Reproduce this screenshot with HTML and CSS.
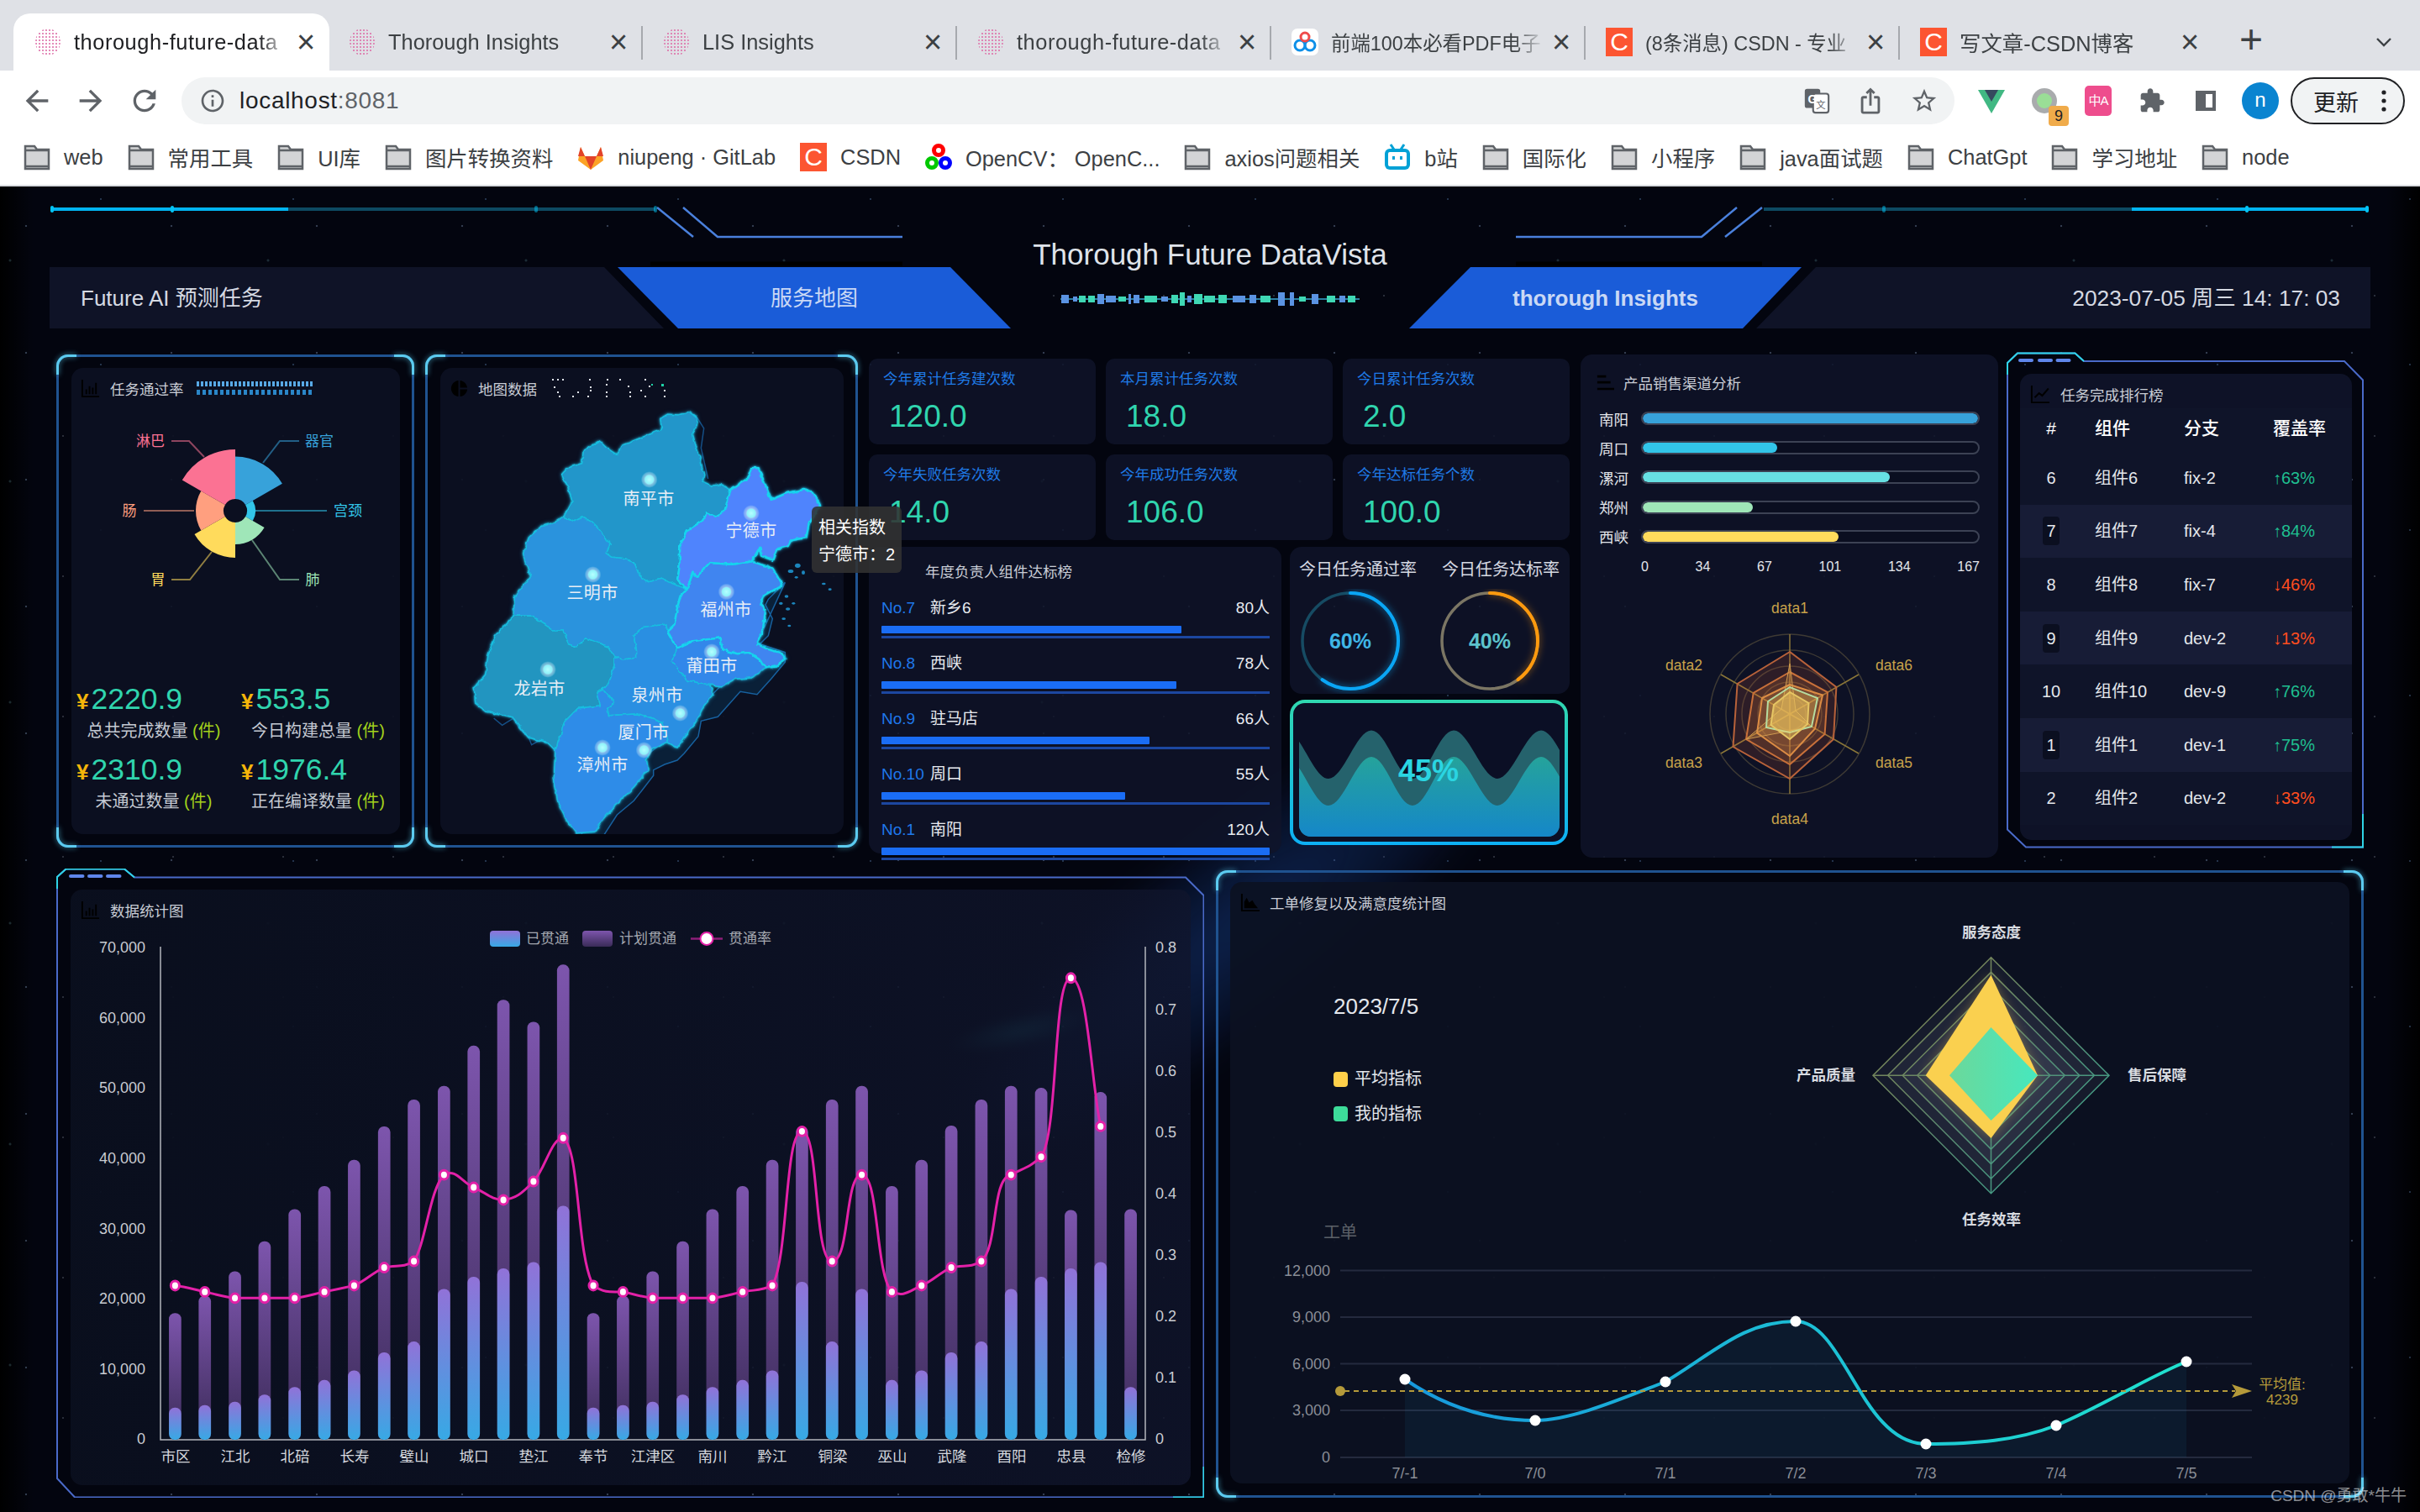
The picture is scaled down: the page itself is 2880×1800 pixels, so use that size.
FILE: index.html
```html
<!DOCTYPE html>
<html lang="zh">
<head>
<meta charset="utf-8">
<title>thorough-future-data</title>
<link rel="stylesheet" href="styles.css">
</head>
<body>
<svg class="sprite" width="0" height="0">
  <defs>
    <pattern id="pinkdots" width="4" height="4" patternUnits="userSpaceOnUse"><circle cx="2" cy="2" r="1.100" fill="#dd6fa8"/></pattern>
    <symbol id="fav" viewBox="0 0 32 32"><ellipse cx="16" cy="16" rx="15" ry="16" fill="url(#pinkdots)"/></symbol>
    <symbol id="folder" viewBox="0 0 32 32"><path d="M2 3h11l3 4h14v23H2z" fill="#d3d4d6" stroke="#5f6368" stroke-width="2.500"/><path d="M2 8h28M2 27h28" stroke="#5f6368" stroke-width="2.500"/></symbol>
    <symbol id="ic-bar" viewBox="0 0 24 24"><path d="M1 1h2v20h20v2H1zM6 13h2v6H6zM10 9h2v10h-2zM14 11h2v8h-2zM18 5h2v14h-2z"/></symbol>
    <symbol id="ic-pie" viewBox="0 0 24 24"><path d="M11 2v20c-5.070-.5-9-4.790-9-10s3.930-9.500 9-10zm2.030 0v8.990H22c-.47-4.740-4.240-8.520-8.970-8.990zm0 11.010V22c4.740-.47 8.500-4.250 8.970-8.990h-8.970z"/></symbol>
    <symbol id="ic-list" viewBox="0 0 24 24"><path d="M1 2h12v3H1zM1 10h18v3H1zM1 19h23v3H1z"/></symbol>
    <symbol id="ic-trend" viewBox="0 0 24 24"><path d="M1 1h2v20h21v2H1zM5 15l6-6 4 3 7-8 1.500 1.400-8.300 9.600-4-3-4.800 4.800z"/></symbol>
    <symbol id="ic-area" viewBox="0 0 24 24"><path d="M1 1h2v20h21v2H1zM5 19V11l3-5 3 6 4-3 3 5 4 5z"/></symbol>
    <linearGradient id="gPlan" x1="0" y1="0" x2="0" y2="1"><stop offset="0" stop-color="#7d55ad"/><stop offset="1" stop-color="#3a2b57"/></linearGradient>
    <linearGradient id="gDone" x1="0" y1="0" x2="0" y2="1"><stop offset="0" stop-color="#9172d8"/><stop offset="1" stop-color="#37a9e5"/></linearGradient>
    <radialGradient id="gDot"><stop offset="0" stop-color="#b6ffff"/><stop offset=".5" stop-color="#8ff2fa"/><stop offset=".62" stop-color="#cfe8f4" stop-opacity=".55"/><stop offset=".85" stop-color="#cfe8f4" stop-opacity=".3"/><stop offset="1" stop-color="#8feaf8" stop-opacity="0"/></radialGradient>
    <linearGradient id="gWave" x1="0" y1="0" x2="0" y2="1"><stop offset="0" stop-color="#25a39b"/><stop offset="1" stop-color="#1587c9"/></linearGradient>
    <linearGradient id="gGrid" gradientUnits="userSpaceOnUse" x1="2229" y1="1139" x2="2511" y2="1421"><stop offset="0" stop-color="#8a8248"/><stop offset=".5" stop-color="#5d8a70"/><stop offset="1" stop-color="#2fa893"/></linearGradient>
    <linearGradient id="gGreen" x1="0" y1="0" x2="1" y2="0"><stop offset="0" stop-color="#6cd89a"/><stop offset="1" stop-color="#46e8be"/></linearGradient>
    <linearGradient id="gLine" gradientUnits="userSpaceOnUse" x1="1672" y1="0" x2="2602" y2="0"><stop offset="0" stop-color="#1798dc"/><stop offset="1" stop-color="#20e2cf"/></linearGradient>
    <filter id="rough" x="-5%" y="-5%" width="110%" height="110%"><feTurbulence type="fractalNoise" baseFrequency=".045" numOctaves="2" seed="7" result="n"/><feDisplacementMap in="SourceGraphic" in2="n" scale="14" xChannelSelector="R" yChannelSelector="G"/></filter>
  </defs>
</svg>

<header class="browser">
  <div class="tabs">
    <div class="tab active"><svg class="fav"><use href="#fav"/></svg><span class="tab-title wide">thorough-future-data</span><span class="tab-x">×</span></div>
    <div class="tab sep"><svg class="fav"><use href="#fav"/></svg><span class="tab-title">Thorough Insights</span><span class="tab-x">×</span></div>
    <div class="tab sep"><svg class="fav"><use href="#fav"/></svg><span class="tab-title">LIS Insights</span><span class="tab-x">×</span></div>
    <div class="tab sep"><svg class="fav"><use href="#fav"/></svg><span class="tab-title wide">thorough-future-data</span><span class="tab-x">×</span></div>
    <div class="tab sep"><svg class="fav" viewBox="0 0 32 32"><rect width="32" height="32" rx="7" fill="#fff"/><circle cx="10" cy="20" r="6" fill="none" stroke="#0d8fe8" stroke-width="3"/><circle cx="22" cy="20" r="6" fill="none" stroke="#0d8fe8" stroke-width="3"/><circle cx="16" cy="10" r="5" fill="none" stroke="#ef4a4a" stroke-width="3"/></svg><span class="tab-title narrow">前端100本必看PDF电子</span><span class="tab-x">×</span></div>
    <div class="tab sep"><span class="csdn fav-c">C</span><span class="tab-title narrow">(8条消息) CSDN - 专业</span><span class="tab-x">×</span></div>
    <div class="tab sep"><span class="csdn fav-c">C</span><span class="tab-title">写文章-CSDN博客</span><span class="tab-x">×</span></div>
    <div class="tab-new">+</div>
    <svg class="tab-chev" viewBox="0 0 20 12"><path d="M2 2l8 8 8-8" fill="none" stroke="#3c4043" stroke-width="2.400"/></svg>
  </div>
  <div class="toolbar">
    <svg class="tool" viewBox="0 0 24 24"><path d="M20 11H7.830l5.590-5.590L12 4l-8 8 8 8 1.410-1.410L7.830 13H20v-2z"/></svg>
    <svg class="tool" viewBox="0 0 24 24"><path d="M12 4l-1.410 1.410L16.170 11H4v2h12.170l-5.580 5.590L12 20l8-8z"/></svg>
    <svg class="tool" viewBox="0 0 24 24"><path d="M17.650 6.350C16.200 4.900 14.210 4 12 4c-4.420 0-7.990 3.580-7.990 8s3.570 8 7.990 8c3.730 0 6.840-2.550 7.730-6h-2.080c-.82 2.330-3.040 4-5.650 4-3.310 0-6-2.690-6-6s2.690-6 6-6c1.660 0 3.140.69 4.220 1.780L13 11h7V4l-2.350 2.350z"/></svg>
    <div class="omnibox">
      <svg class="omni-info" viewBox="0 0 24 24"><path d="M11 7h2v2h-2zm0 4h2v6h-2zm1-9C6.480 2 2 6.480 2 12s4.480 10 10 10 10-4.480 10-10S17.520 2 12 2zm0 18c-4.410 0-8-3.590-8-8s3.590-8 8-8 8 3.590 8 8-3.590 8-8 8z"/></svg>
      <span class="url">localhost<span class="url-port">:8081</span></span>
      <svg class="omni-ic" viewBox="0 0 24 24"><rect x="2" y="2" width="13" height="16" rx="2" fill="#5f6368"/><rect x="9" y="6" width="13" height="16" rx="2" fill="#fff" stroke="#5f6368" stroke-width="1.500"/><text x="8.500" y="14" class="gt">G</text><text x="15.500" y="18" class="gt2">文</text></svg>
      <svg class="omni-ic" viewBox="0 0 24 24"><path d="M16 5l-1.420 1.420-1.590-1.590V16h-1.980V4.830L9.420 6.420 8 5l4-4 4 4zm4 5v11c0 1.100-.9 2-2 2H6c-1.110 0-2-.9-2-2V10c0-1.110.89-2 2-2h3v2H6v11h12V10h-3V8h3c1.100 0 2 .89 2 2z"/></svg>
      <svg class="omni-ic" viewBox="0 0 24 24"><path d="M22 9.240l-7.190-.62L12 2 9.190 8.630 2 9.240l5.460 4.730L5.820 21 12 17.270 18.180 21l-1.630-7.030L22 9.240zM12 15.400l-3.760 2.270 1-4.280-3.320-2.880 4.380-.38L12 6.100l1.710 4.040 4.380.38-3.320 2.880 1 4.280L12 15.400z"/></svg>
    </div>
    <div class="ext-row">
      <svg class="ext" viewBox="0 0 32 32"><path d="M0 3h32L16 31z" fill="#41b883"/><path d="M8 3h16L16 17z" fill="#35495e"/></svg>
      <span class="ext-badged"><svg class="ext" viewBox="0 0 32 32"><circle cx="16" cy="16" r="15" fill="#a9abad"/><circle cx="16" cy="16" r="9" fill="#9ade96"/></svg><span class="badge">9</span></span>
      <span class="ext-pink">中A</span>
      <svg class="ext" viewBox="0 0 24 24"><path class="dk" d="M20.500 11H19V7c0-1.100-.9-2-2-2h-4V3.500C13 2.120 11.880 1 10.500 1S8 2.120 8 3.500V5H4c-1.100 0-1.990.9-1.990 2v3.800H3.500c1.490 0 2.700 1.210 2.700 2.700s-1.210 2.700-2.700 2.700H2V20c0 1.100.9 2 2 2h3.800v-1.500c0-1.490 1.210-2.700 2.700-2.700 1.490 0 2.700 1.210 2.700 2.700V22H17c1.100 0 2-.9 2-2v-4h1.500c1.380 0 2.500-1.120 2.500-2.500S21.880 11 20.500 11z"/></svg>
      <svg class="ext" viewBox="0 0 32 32"><path class="dk" d="M4 4h24v24H4zM16 8v16h8V8z" fill-rule="evenodd"/></svg>
      <span class="avatar">n</span>
      <span class="update">更新<svg class="dots" viewBox="0 0 6 26"><circle cx="3" cy="3" r="2.600"/><circle cx="3" cy="13" r="2.600"/><circle cx="3" cy="23" r="2.600"/></svg></span>
    </div>
  </div>
  <div class="bookmarks">
    <span class="bm"><svg class="bm-ic"><use href="#folder"/></svg>web</span>
    <span class="bm"><svg class="bm-ic"><use href="#folder"/></svg>常用工具</span>
    <span class="bm"><svg class="bm-ic"><use href="#folder"/></svg>UI库</span>
    <span class="bm"><svg class="bm-ic"><use href="#folder"/></svg>图片转换资料</span>
    <span class="bm"><svg class="bm-ic" viewBox="0 0 32 32"><path d="M16 31L1 20l3-16 5 11h14l5-11 3 16z" fill="#fca326"/><path d="M16 31L9 15h14z" fill="#e24329"/><path d="M4 4l5 11H1zM28 4l-5 11h8z" fill="#e24329"/></svg>niupeng · GitLab</span>
    <span class="bm"><span class="csdn">C</span>CSDN</span>
    <span class="bm"><svg class="bm-ic" viewBox="0 0 32 32"><g fill="none" stroke-width="5"><circle cx="16" cy="8" r="5.500" stroke="#ff0000"/><circle cx="8" cy="23" r="5.500" stroke="#00c800"/><circle cx="24" cy="23" r="5.500" stroke="#0000ff"/></g></svg>OpenCV： OpenC...</span>
    <span class="bm"><svg class="bm-ic"><use href="#folder"/></svg>axios问题相关</span>
    <span class="bm"><svg class="bm-ic" viewBox="0 0 32 32"><path d="M8 1l4 6M24 1l-4 6" stroke="#00a1d6" stroke-width="3"/><rect x="1" y="6" width="30" height="25" rx="6" fill="#00a1d6"/><rect x="5" y="10" width="22" height="17" rx="2" fill="#fff"/><rect x="10" y="15" width="3" height="4" fill="#00a1d6"/><rect x="19" y="15" width="3" height="4" fill="#00a1d6"/></svg>b站</span>
    <span class="bm"><svg class="bm-ic"><use href="#folder"/></svg>国际化</span>
    <span class="bm"><svg class="bm-ic"><use href="#folder"/></svg>小程序</span>
    <span class="bm"><svg class="bm-ic"><use href="#folder"/></svg>java面试题</span>
    <span class="bm"><svg class="bm-ic"><use href="#folder"/></svg>ChatGpt</span>
    <span class="bm"><svg class="bm-ic"><use href="#folder"/></svg>学习地址</span>
    <span class="bm"><svg class="bm-ic"><use href="#folder"/></svg>node</span>
  </div>
</header>

<main class="dash">
  <div class="nebula neb-a"></div>
  <div class="nebula neb-b"></div>
  <svg class="hd-deco" width="2880" height="100" viewBox="0 222 2880 100">
    <g class="hd-lines">
      <path class="l-dim" d="M343 249H780M2099 249H2537"/>
      <path class="l-bright" d="M62 249H343M2537 249H2817"/>
      <path class="l-blue" d="M782 247L825 282M813 247L854 282H1074M1804 282H2025L2067 247M2053 282L2097 247"/>
      <path class="l-black" d="M774 314H1074M1804 314H2097"/>
      <g class="l-node"><rect x="60" y="245" width="4" height="8" rx="2"/><rect x="203" y="245" width="4" height="8" rx="2"/><rect x="636" y="245" width="4" height="8" rx="2" opacity=".5"/><rect x="778" y="245" width="4" height="8" rx="2" opacity=".5"/><rect x="2240" y="245" width="4" height="8" rx="2" opacity=".5"/><rect x="2672" y="245" width="4" height="8" rx="2"/><rect x="2815" y="245" width="4" height="8" rx="2"/></g>
    </g>
  </svg>

  <section class="hd-row">
    <div class="hd-bar hd-left">Future AI 预测任务</div>
    <div class="hd-tab hd-tab-l">服务地图</div>
    <div class="hd-center">
      <h1 class="hd-title">Thorough Future DataVista</h1>
      <svg class="hd-wave" width="356" height="20" viewBox="1261 346 356 20">
        <path class="w-line" d="M1261 355h356v2h-356z"/>
        <path class="w-blue" d="M1262 351h9v10h-9zM1276 353h5v6h-5zM1305 350h8v12h-8zM1315 352h12v8h-12zM1342 350h3v12h-3zM1348 351h7v10h-7zM1381 353h8v6h-8zM1412 352h5v8h-5zM1466 352h15v8h-15zM1486 351h8v10h-8zM1520 348h8v16h-8zM1534 348h5v16h-5zM1560 350h8v12h-8zM1593 352h7v8h-7z"/>
        <path class="w-green" d="M1283 352h8v8h-8zM1294 352h8v8h-8zM1330 353h9v6h-9zM1361 352h15v8h-15zM1393 351h8v10h-8zM1403 348h6v16h-6zM1420 350h10v12h-10zM1432 352h13v8h-13zM1449 351h10v10h-10zM1499 352h12v8h-12zM1545 353h8v6h-8zM1578 352h10v8h-10zM1603 352h9v8h-9z"/>
      </svg>
    </div>
    <div class="hd-tab hd-tab-r">thorough Insights</div>
    <div class="hd-bar hd-right">2023-07-05 周三 14: 17: 03</div>
  </section>

  <section class="row-top">
    <article class="frame frame-a">
      <i class="cn tl"></i><i class="cn tr"></i><i class="cn bl"></i><i class="cn br"></i>
      <div class="inner">
        <div class="title t-a"><svg class="t-ic"><use href="#ic-bar"/></svg>任务通过率<span class="bars-deco"></span></div>
        <svg class="pie" width="391" height="327" viewBox="85 483 391 327">
          <path fill="#37a2da" d="M280 594V543.500A64.500 64.500 0 0 1 335.900 575.750L292.100 601A14 14 0 0 0 280 594Z"/>
          <path fill="#32c5e9" d="M292.100 601L300.800 596A24 24 0 0 1 300.800 620L292.100 615A14 14 0 0 0 292.100 601Z"/>
          <path fill="#9fe6b8" d="M292.100 615L314.600 628A40 40 0 0 1 280 648V622A14 14 0 0 0 292.100 615Z"/>
          <path fill="#ffdb5c" d="M280 622V664A56 56 0 0 1 231.500 636L267.900 615A14 14 0 0 0 280 622Z"/>
          <path fill="#ff9f7f" d="M267.900 615L239.300 631.500A47 47 0 0 1 239.300 584.500L267.900 601A14 14 0 0 0 267.900 615Z"/>
          <path fill="#fb7293" d="M267.900 601L216.800 571.500A73 73 0 0 1 280 535V594A14 14 0 0 0 267.900 601Z"/>
          <g class="pie-lines">
            <path stroke="#37a2da" d="M313 551L333 525H356"/>
            <path stroke="#32c5e9" d="M302 608H389"/>
            <path stroke="#9fe6b8" d="M300 643L333 690H356"/>
            <path stroke="#ffdb5c" d="M252 657L226 690H204"/>
            <path stroke="#ff9f7f" d="M231 608H171"/>
            <path stroke="#fb7293" d="M243 544L225 525H204"/>
          </g>
          <g class="pie-labels">
            <text x="380" y="525" fill="#37a2da">器官</text>
            <text x="414" y="608" fill="#32c5e9">宫颈</text>
            <text x="372" y="690" fill="#9fe6b8">肺</text>
            <text x="188" y="690" fill="#ffdb5c">胃</text>
            <text x="154" y="608" fill="#ff9f7f">肠</text>
            <text x="179" y="525" fill="#fb7293">淋巴</text>
          </g>
        </svg>
        <div class="stats">
          <div class="stat"><div class="stat-v"><span class="yen">¥</span>2220.9</div><div class="stat-l">总共完成数量 <em>(件)</em></div></div>
          <div class="stat"><div class="stat-v"><span class="yen">¥</span>553.5</div><div class="stat-l">今日构建总量 <em>(件)</em></div></div>
          <div class="stat"><div class="stat-v"><span class="yen">¥</span>2310.9</div><div class="stat-l">未通过数量 <em>(件)</em></div></div>
          <div class="stat"><div class="stat-v"><span class="yen">¥</span>1976.4</div><div class="stat-l">正在编译数量 <em>(件)</em></div></div>
        </div>
      </div>
    </article>

    <article class="frame frame-b">
      <i class="cn tl"></i><i class="cn tr"></i><i class="cn bl"></i><i class="cn br"></i>
      <div class="inner">
        <div class="title t-a"><svg class="t-ic t-pie"><use href="#ic-pie"/></svg>地图数据<svg class="dots-deco" width="136" height="22" viewBox="0 0 136 22"><path d="M0 0h2v2h-2zM6 0h2v2h-2zM12 0h2v2h-2zM44 0h2v2h-2zM65 0h2v2h-2zM80 0h2v2h-2zM110 0h2v2h-2zM2 9h2v2h-2zM45 9h2v2h-2zM64 6h2v2h-2zM90 8h2v2h-2zM115 8h2v2h-2zM6 15h2v2h-2zM30 15h2v2h-2zM45 13h2v2h-2zM64 15h2v2h-2zM92 15h2v2h-2zM105 13h2v2h-2zM133 13h2v2h-2zM8 20h2v2h-2zM24 20h2v2h-2zM42 20h2v2h-2zM64 20h2v2h-2zM92 20h2v2h-2zM110 20h2v2h-2zM133 20h2v2h-2z"/><path class="dd-g" d="M118 6h2v2h-2zM130 6h3v3h-3z"/></svg></div>
        <svg class="map" width="481" height="510" viewBox="523 483 481 510">
          <g transform="translate(560,480) scale(.33333)">
            <path class="coast" d="M1120 640L1060 700L1050 720L1075 770L1060 830L1030 860L1120 890L1120 925L1070 985L1020 1040L960 1030L920 1075L880 1120L820 1135L810 1190L760 1250L735 1275L690 1290L650 1310L650 1330L580 1420L520 1470L465 1555L390 1550L440 1400L700 1200L1000 900Z"/>
            <path class="coast-line" d="M80 1125L110 1150L150 1125L170 1160L205 1195L215 1220L260 1195M805 50L830 90L820 160L845 270"/>
            <g class="isles"><ellipse cx="1258" cy="645" rx="7" ry="4"/><ellipse cx="1280" cy="665" rx="6" ry="4"/><ellipse cx="1125" cy="690" rx="7" ry="5"/><ellipse cx="1105" cy="715" rx="7" ry="5"/><ellipse cx="1130" cy="735" rx="8" ry="5"/><ellipse cx="1150" cy="715" rx="6" ry="4"/><ellipse cx="1115" cy="770" rx="7" ry="4"/><ellipse cx="1135" cy="795" rx="6" ry="4"/><ellipse cx="1140" cy="600" rx="10" ry="6"/><ellipse cx="1165" cy="580" rx="10" ry="8"/><ellipse cx="1185" cy="605" rx="6" ry="7"/><ellipse cx="1160" cy="622" rx="6" ry="4"/></g>
            <g class="glow"><g filter="url(#rough)" class="regions">
              <path fill="#2096ca" d="M675 55L700 40L740 42L780 30L805 50L810 70L790 110L800 150L815 190L830 260L825 280L860 295L890 290L925 310L905 385L870 405L840 390L825 420L770 455L745 510L742 590L735 630L770 665L720 645L680 625L625 640L600 615L585 575L550 555L500 550L480 535L495 505L480 480L455 450L430 425L395 405L365 420L330 405L360 350L345 300L322 255L345 230L395 215L400 170L460 135L490 165L520 185L540 150L615 120L680 95Z"/>
              <path fill="#2b93dd" d="M330 405L365 420L395 405L430 425L455 450L480 480L495 505L480 535L500 550L550 555L585 575L600 615L625 640L680 625L720 645L770 665L745 690L735 730L725 790L700 815L695 790L610 800L580 830L590 885L590 910L540 915L510 905L490 870L410 840L375 870L345 860L330 810L290 810L245 780L215 760L150 760L155 690L210 620L185 540L205 480L250 440L300 425Z"/>
              <path fill="#2295c0" d="M150 760L215 760L245 780L290 810L330 810L345 860L375 870L410 840L490 870L510 905L510 940L490 1000L450 1030L460 1080L380 1090L330 1140L320 1180L300 1240L270 1210L205 1195L150 1125L50 1100L15 1075L10 1015L50 970L60 900L85 830Z"/>
              <path fill="#2c8fe2" d="M580 830L610 800L695 790L700 815L735 875L715 920L770 990L850 1005L865 1040L830 1080L800 1140L760 1190L735 1230L700 1210L680 1140L590 1110L490 1115L485 1090L510 1070L470 1020L490 1000L510 940L510 905L540 915L590 910L590 885Z"/>
              <path fill="#2f8ce8" d="M470 1020L510 1070L485 1090L490 1115L590 1110L680 1140L700 1210L640 1240L625 1270L630 1310L580 1370L510 1440L460 1500L440 1530L375 1535L340 1490L310 1430L295 1340L300 1240L320 1180L330 1140L380 1090L460 1080L450 1030Z"/>
              <path fill="#3387ea" d="M735 875L790 850L890 838L895 880L950 895L990 890L1035 920L1050 945L1000 980L940 985L895 1010L850 1005L770 990L715 920Z"/>
              <path class="bright" fill="#3f85f0" d="M770 665L775 650L790 605L805 620L850 570L930 575L1000 565L1075 590L1110 650L1040 690L1030 720L1050 740L1040 810L1020 860L1060 880L1100 890L1120 910L1090 940L1050 945L1035 920L990 890L950 895L895 880L890 838L790 850L735 875L700 815L725 790L735 730L745 690Z"/>
              <path class="bright" fill="#4f84fd" d="M925 310L985 270L1000 232L1025 232L1040 270L1070 345L1130 320L1190 308L1220 320L1245 365L1225 400L1205 430L1195 480L1140 490L1130 510L1090 520L1075 560L1035 545L1030 515L1000 565L930 575L850 570L805 620L790 605L775 650L770 665L735 630L742 590L745 510L770 455L825 420L840 390L870 405L905 385Z"/>
            </g></g>
          </g>
          <g fill="url(#gDot)">
            <circle cx="771.700" cy="571" r="10"/><circle cx="893" cy="611" r="10"/><circle cx="704.500" cy="684" r="10"/><circle cx="863.500" cy="704.500" r="10"/><circle cx="846" cy="776" r="10"/><circle cx="651" cy="797" r="10"/><circle cx="808.500" cy="849" r="10"/><circle cx="765.500" cy="893" r="10"/><circle cx="716" cy="890" r="10"/>
          </g>
          <g class="city">
            <text x="771" y="594">南平市</text><text x="893" y="632">宁德市</text><text x="704" y="706">三明市</text><text x="863" y="726">福州市</text><text x="846" y="793">莆田市</text><text x="641" y="820">龙岩市</text><text x="781" y="828">泉州市</text><text x="765" y="872">厦门市</text><text x="716" y="911">漳州市</text>
          </g>
        </svg>
      </div>
      <div class="tip">相关指数<br>宁德市：2</div>
    </article>

    <div class="mid">
      <div class="kpis">
        <div class="kpi"><div class="kpi-l">今年累计任务建次数</div><div class="kpi-v">120.0</div></div>
        <div class="kpi"><div class="kpi-l">本月累计任务次数</div><div class="kpi-v">18.0</div></div>
        <div class="kpi"><div class="kpi-l">今日累计任务次数</div><div class="kpi-v">2.0</div></div>
        <div class="kpi"><div class="kpi-l">今年失败任务次数</div><div class="kpi-v">14.0</div></div>
        <div class="kpi"><div class="kpi-l">今年成功任务次数</div><div class="kpi-v">106.0</div></div>
        <div class="kpi"><div class="kpi-l">今年达标任务个数</div><div class="kpi-v">100.0</div></div>
      </div>
      <div class="mid-low">
        <div class="rank card">
          <div class="rank-title">年度负责人组件达标榜</div>
          <div class="rank-item"><div class="ri-top"><span class="ri-no">No.7</span><span class="ri-name">新乡6</span><span class="ri-val">80人</span></div><div class="ri-bar" style="width:77.200%"></div><div class="ri-track"></div></div>
          <div class="rank-item"><div class="ri-top"><span class="ri-no">No.8</span><span class="ri-name">西峡</span><span class="ri-val">78人</span></div><div class="ri-bar" style="width:76%"></div><div class="ri-track"></div></div>
          <div class="rank-item"><div class="ri-top"><span class="ri-no">No.9</span><span class="ri-name">驻马店</span><span class="ri-val">66人</span></div><div class="ri-bar" style="width:69%"></div><div class="ri-track"></div></div>
          <div class="rank-item"><div class="ri-top"><span class="ri-no">No.10</span><span class="ri-name">周口</span><span class="ri-val">55人</span></div><div class="ri-bar" style="width:62.800%"></div><div class="ri-track"></div></div>
          <div class="rank-item"><div class="ri-top"><span class="ri-no">No.1</span><span class="ri-name">南阳</span><span class="ri-val">120人</span></div><div class="ri-bar" style="width:100%"></div><div class="ri-track"></div></div>
        </div>
        <div class="mid-right">
          <div class="rings card">
            <div class="rings-titles"><span>今日任务通过率</span><span>今日任务达标率</span></div>
            <svg class="rings-svg" width="333" height="125" viewBox="1535 702 333 125">
              <circle class="ring-base rb-a" cx="1607" cy="764" r="57"/>
              <circle class="ring-on ro-a" cx="1607" cy="764" r="57" pathLength="100" stroke-dasharray="60 100" transform="rotate(-90 1607 764)"/>
              <circle class="ring-base rb-b" cx="1773" cy="764" r="57"/>
              <circle class="ring-on ro-b" cx="1773" cy="764" r="57" pathLength="100" stroke-dasharray="40 100" transform="rotate(-90 1773 764)"/>
              <text class="ring-t rt-a" x="1607" y="764">60%</text>
              <text class="ring-t rt-b" x="1773" y="764">40%</text>
            </svg>
          </div>
          <div class="wave">
            <svg class="wave-svg" width="323" height="165" viewBox="1539 838 323 165">
              <clipPath id="waveClip"><rect x="1546" y="850" width="310" height="147" rx="14"/></clipPath>
              <g clip-path="url(#waveClip)">
                <path class="wave-back" d="M1530 870.600C1548 870.600 1563 928 1581 928C1599 928 1614 870.600 1632 870.600C1650 870.600 1663 928 1681 928C1699 928 1712 870.600 1730 870.600C1748 870.600 1764 928 1782 928C1800 928 1816 870.600 1834 870.600C1852 870.600 1866 928 1884 928V997H1530Z"/>
                <path fill="url(#gWave)" d="M1530 902C1548 902 1563 960 1581 960C1599 960 1614 902 1632 902C1650 902 1663 960 1681 960C1699 960 1712 902 1730 902C1748 902 1764 960 1782 960C1800 960 1816 902 1834 902C1852 902 1866 960 1884 960V997H1530Z"/>
              </g>
              <text class="wave-t" x="1700" y="918">45%</text>
            </svg>
          </div>
        </div>
      </div>
    </div>

    <article class="product card">
      <div class="title t-p"><svg class="t-ic t-list"><use href="#ic-list"/></svg>产品销售渠道分析</div>
      <div class="hbars">
        <div class="hbar"><span class="hb-l">南阳</span><div class="hb-track"><div class="hb-fill hf1" style="width:100%"></div></div></div>
        <div class="hbar"><span class="hb-l">周口</span><div class="hb-track"><div class="hb-fill hf2" style="width:40%"></div></div></div>
        <div class="hbar"><span class="hb-l">漯河</span><div class="hb-track"><div class="hb-fill hf3" style="width:73.600%"></div></div></div>
        <div class="hbar"><span class="hb-l">郑州</span><div class="hb-track"><div class="hb-fill hf4" style="width:32.800%"></div></div></div>
        <div class="hbar"><span class="hb-l">西峡</span><div class="hb-track"><div class="hb-fill hf5" style="width:58.500%"></div></div></div>
      </div>
      <div class="haxis"><span>0</span><span>34</span><span>67</span><span>101</span><span>134</span><span>167</span></div>
      <svg class="radar" width="497" height="334" viewBox="1881 687 497 334">
        <g class="rd-grid">
          <circle cx="2130" cy="850" r="95"/><circle cx="2130" cy="850" r="76"/><circle cx="2130" cy="850" r="57"/><circle cx="2130" cy="850" r="38"/><circle cx="2130" cy="850" r="19"/>
        </g>
        <path class="rd-axis" d="M2130 755V945M2048 803L2212 897M2048 897L2212 803"/>
        <polygon class="rs rs-a" points="2130,776 2067.600,814 2062.500,889 2130,927 2182,880 2185.400,818"/>
        <polygon class="rs rs-b" points="2130,800 2086.700,825 2078,880 2130,910 2171.600,874 2175,824"/>
        <polygon class="rs rs-c" points="2130,815 2097,831 2091,872.500 2130,900 2160,867.500 2169,827.500"/>
        <polygon class="rs rs-f" points="2130,790 2120,844 2078,880 2130,870 2156,865 2137,846"/>
        <polygon class="rs rs-d" points="2130,818 2104,835 2102,866 2130,872 2156,865 2163,831"/>
        <polygon class="rs rs-e" points="2130,824 2111,839 2107.500,863 2130,880 2151,862 2152.500,837"/>
        <g class="rd-labels">
          <text x="2130" y="724">data1</text><text x="2004" y="792">data2</text><text x="2254" y="792">data6</text><text x="2004" y="908">data3</text><text x="2254" y="908">data5</text><text x="2130" y="975">data4</text>
        </g>
      </svg>
    </article>

    <article class="cutframe cut-rank">
      <svg class="cut-svg" width="425" height="591" viewBox="2388 418 425 591">
        <path class="cut-l" d="M2389 431L2401 419.500H2469.500L2480 429H2790L2812 451.500V1007.500H2411L2389 986.500Z"/>
        <path class="cut-c" d="M2389 445V431L2401 419.500H2469.500L2480 429M2812 968V1007.500H2775"/>
        <g class="cut-dash"><rect x="2402" y="426" width="18" height="4" rx="2"/><rect x="2425" y="426" width="18" height="4" rx="2"/><rect x="2446.500" y="426" width="18" height="4" rx="2"/></g>
      </svg>
      <div class="inner rank-inner">
        <div class="title t-r"><svg class="t-ic t-trend"><use href="#ic-trend"/></svg>任务完成排行榜</div>
        <div class="tbl">
          <div class="trow th"><span class="c0">#</span><span>组件</span><span>分支</span><span>覆盖率</span></div>
          <div class="trow"><span class="c0">6</span><span>组件6</span><span>fix-2</span><span class="up"><b>↑</b>63%</span></div>
          <div class="trow alt"><span class="c0"><u>7</u></span><span>组件7</span><span>fix-4</span><span class="up"><b>↑</b>84%</span></div>
          <div class="trow"><span class="c0">8</span><span>组件8</span><span>fix-7</span><span class="down"><b>↓</b>46%</span></div>
          <div class="trow alt"><span class="c0"><u>9</u></span><span>组件9</span><span>dev-2</span><span class="down"><b>↓</b>13%</span></div>
          <div class="trow"><span class="c0">10</span><span>组件10</span><span>dev-9</span><span class="up"><b>↑</b>76%</span></div>
          <div class="trow alt"><span class="c0"><u>1</u></span><span>组件1</span><span>dev-1</span><span class="up"><b>↑</b>75%</span></div>
          <div class="trow"><span class="c0">2</span><span>组件2</span><span>dev-2</span><span class="down"><b>↓</b>33%</span></div>
        </div>
      </div>
    </article>
  </section>

  <section class="row-bottom">
    <article class="cutframe cut-chart">
      <svg class="cut-svg" width="1366" height="749" viewBox="67 1034 1366 749">
        <path class="cut-l" d="M68 1044L78.500 1034.500H148L160 1044.500H1411L1432.500 1066V1782.500H89L68 1760Z"/>
        <path class="cut-c" d="M68 1058V1044L78.500 1034.500H148L160 1044.500M1432.500 1746V1782.500H1396"/>
        <g class="cut-dash"><rect x="82" y="1041" width="18.500" height="4" rx="2"/><rect x="104" y="1041" width="18.500" height="4" rx="2"/><rect x="126" y="1041" width="18.500" height="4" rx="2"/></g>
      </svg>
      <div class="inner chart-inner">
        <div class="title t-c"><svg class="t-ic"><use href="#ic-bar"/></svg>数据统计图</div>
        <svg class="combo" width="1333" height="663" viewBox="84 1105 1333 663">
          <path class="axis" d="M191 1127V1714H1363V1127"/>
          <g class="ylab">
            <text x="173" y="1128">70,000</text><text x="173" y="1212">60,000</text><text x="173" y="1295">50,000</text><text x="173" y="1379">40,000</text><text x="173" y="1463">30,000</text><text x="173" y="1546">20,000</text><text x="173" y="1630">10,000</text><text x="173" y="1713">0</text>
          </g>
          <g class="rlab">
            <text x="1375" y="1128">0.8</text><text x="1375" y="1202">0.7</text><text x="1375" y="1275">0.6</text><text x="1375" y="1348">0.5</text><text x="1375" y="1421">0.4</text><text x="1375" y="1494">0.3</text><text x="1375" y="1567">0.2</text><text x="1375" y="1640">0.1</text><text x="1375" y="1713">0</text>
          </g>
          <g transform="translate(50,1020) scale(.4591,.4975)">
            <g class="bars" fill="url(#gPlan)">
              <rect x="329" y="1092" height="303"/><rect x="406" y="1050" height="345"/><rect x="484" y="992" height="403"/><rect x="561" y="920" height="475"/><rect x="639" y="843" height="552"/><rect x="716" y="788" height="607"/><rect x="793" y="725" height="670"/><rect x="871" y="645" height="750"/><rect x="948" y="581" height="814"/><rect x="1026" y="548" height="847"/><rect x="1103" y="452" height="943"/><rect x="1180" y="342" height="1053"/><rect x="1258" y="395" height="1000"/><rect x="1335" y="258" height="1137"/><rect x="1413" y="1092" height="303"/><rect x="1490" y="1050" height="345"/><rect x="1567" y="992" height="403"/><rect x="1645" y="920" height="475"/><rect x="1722" y="843" height="552"/><rect x="1800" y="788" height="607"/><rect x="1877" y="725" height="670"/><rect x="1954" y="645" height="750"/><rect x="2032" y="581" height="814"/><rect x="2109" y="548" height="847"/><rect x="2187" y="788" height="607"/><rect x="2264" y="725" height="670"/><rect x="2341" y="643" height="752"/><rect x="2419" y="581" height="814"/><rect x="2496" y="548" height="847"/><rect x="2574" y="553" height="842"/><rect x="2651" y="845" height="550"/><rect x="2728" y="563" height="832"/><rect x="2806" y="843" height="552"/>
            </g>
            <g class="bars" fill="url(#gDone)">
              <rect x="329" y="1318" height="77"/><rect x="406" y="1312" height="83"/><rect x="484" y="1304" height="91"/><rect x="561" y="1287" height="108"/><rect x="639" y="1269" height="126"/><rect x="716" y="1252" height="143"/><rect x="793" y="1229" height="166"/><rect x="871" y="1186" height="209"/><rect x="948" y="1160" height="235"/><rect x="1026" y="1034" height="361"/><rect x="1103" y="1005" height="390"/><rect x="1180" y="985" height="410"/><rect x="1258" y="970" height="425"/><rect x="1335" y="835" height="560"/><rect x="1413" y="1318" height="77"/><rect x="1490" y="1312" height="83"/><rect x="1567" y="1304" height="91"/><rect x="1645" y="1287" height="108"/><rect x="1722" y="1269" height="126"/><rect x="1800" y="1252" height="143"/><rect x="1877" y="1229" height="166"/><rect x="1954" y="1017" height="378"/><rect x="2032" y="1160" height="235"/><rect x="2109" y="1034" height="361"/><rect x="2187" y="1252" height="143"/><rect x="2264" y="1229" height="166"/><rect x="2341" y="1186" height="209"/><rect x="2419" y="1160" height="235"/><rect x="2496" y="1034" height="361"/><rect x="2574" y="1005" height="390"/><rect x="2651" y="985" height="410"/><rect x="2728" y="970" height="425"/><rect x="2806" y="1269" height="126"/>
            </g>
            <path class="rate" d="M345 1026C376 1029 391 1035 422 1041C453 1047 469 1053 500 1056C531 1056 546 1056 577 1056C608 1056 624 1056 655 1056C686 1053 701 1047 732 1041C763 1035 778 1032 809 1026C840 1014 856 995 887 983C918 975 933 985 964 968C995 924 1005 796 1042 761C1073 745 1088 779 1119 791C1150 803 1165 821 1196 821C1227 818 1243 807 1274 777C1305 747 1320 673 1351 673C1395 700 1385 952 1429 1026C1460 1045 1475 1041 1506 1041C1537 1047 1552 1053 1583 1056C1614 1056 1630 1056 1661 1056C1692 1056 1707 1056 1738 1056C1769 1053 1785 1047 1816 1041C1847 1035 1862 1040 1893 1026C1935 960 1925 657 1970 657C2015 657 2000 968 2048 968C2095 968 2080 761 2125 761C2170 761 2160 1000 2203 1041C2234 1055 2249 1038 2280 1026C2311 1014 2326 995 2357 983C2388 975 2404 985 2435 968C2480 930 2460 770 2512 761C2543 745 2559 745 2590 718C2635 660 2620 290 2667 290C2710 290 2720 540 2744 645"/>
            <g class="marks">
              <circle cx="345" cy="1026"/><circle cx="422" cy="1041"/><circle cx="500" cy="1056"/><circle cx="577" cy="1056"/><circle cx="655" cy="1056"/><circle cx="732" cy="1041"/><circle cx="809" cy="1026"/><circle cx="887" cy="983"/><circle cx="964" cy="968"/><circle cx="1042" cy="761"/><circle cx="1119" cy="791"/><circle cx="1196" cy="821"/><circle cx="1274" cy="777"/><circle cx="1351" cy="673"/><circle cx="1429" cy="1026"/><circle cx="1506" cy="1041"/><circle cx="1583" cy="1056"/><circle cx="1661" cy="1056"/><circle cx="1738" cy="1056"/><circle cx="1816" cy="1041"/><circle cx="1893" cy="1026"/><circle cx="1970" cy="657"/><circle cx="2048" cy="968"/><circle cx="2125" cy="761"/><circle cx="2203" cy="1041"/><circle cx="2280" cy="1026"/><circle cx="2357" cy="983"/><circle cx="2435" cy="968"/><circle cx="2512" cy="761"/><circle cx="2590" cy="718"/><circle cx="2667" cy="290"/><circle cx="2744" cy="645"/>
            </g>
          </g>
          <g class="xlab">
            <text x="209" y="1734">市区</text><text x="280" y="1734">江北</text><text x="351" y="1734">北碚</text><text x="422" y="1734">长寿</text><text x="493" y="1734">璧山</text><text x="564" y="1734">城口</text><text x="635" y="1734">垫江</text><text x="706" y="1734">奉节</text><text x="777" y="1734">江津区</text><text x="848" y="1734">南川</text><text x="919" y="1734">黔江</text><text x="991" y="1734">铜梁</text><text x="1062" y="1734">巫山</text><text x="1133" y="1734">武隆</text><text x="1204" y="1734">酉阳</text><text x="1275" y="1734">忠县</text><text x="1346" y="1734">检修</text>
          </g>
          <g class="legend">
            <rect x="583" y="1108" width="36" height="19" rx="4" fill="url(#gDone)"/><text x="626" y="1117.500">已贯通</text>
            <rect x="693" y="1108" width="36" height="19" rx="4" fill="url(#gPlan)"/><text x="737" y="1117.500">计划贯通</text>
            <path class="lg-line" d="M822 1117.500H860"/><circle class="lg-dot" cx="841" cy="1117.500" r="7.500"/><text x="867" y="1117.500">贯通率</text>
          </g>
        </svg>
      </div>
    </article>

    <article class="frame frame-c">
      <i class="cn tl"></i><i class="cn tr"></i><i class="cn bl"></i><i class="cn br"></i>
      <div class="inner">
        <div class="title t-d"><svg class="t-ic t-area"><use href="#ic-area"/></svg>工单修复以及满意度统计图</div>
        <svg class="repair" width="1332" height="674" viewBox="1464 1092 1332 674">
          <text class="rp-date" x="1587" y="1198">2023/7/5</text>
          <rect x="1587" y="1276" width="17" height="18" rx="4" fill="#ffd04a"/><text class="rp-lg" x="1612" y="1284">平均指标</text>
          <rect x="1587" y="1317" width="17" height="18" rx="4" fill="#3ddc9a"/><text class="rp-lg" x="1612" y="1326">我的指标</text>
          <g class="rp-grid" stroke="url(#gGrid)">
            <polygon points="2369.500,1139.800 2510,1280.300 2369.500,1420.800 2229,1280.300"/><polygon points="2369.500,1157.400 2492.400,1280.300 2369.500,1403.200 2246.600,1280.300"/><polygon points="2369.500,1175 2474.800,1280.300 2369.500,1385.600 2264.200,1280.300"/><polygon points="2369.500,1192.500 2457.300,1280.300 2369.500,1368.100 2281.700,1280.300"/><polygon points="2369.500,1210 2439.800,1280.300 2369.500,1350.600 2299.200,1280.300"/><polygon points="2369.500,1227.500 2422.300,1280.300 2369.500,1333.100 2316.700,1280.300"/>
            <path d="M2369.500 1139.800V1420.800M2229 1280.300H2510"/>
          </g>
          <polygon class="rp-yellow" fill="#fad04f" points="2369.500,1160.700 2425,1280.300 2369.500,1355 2291.700,1280.300"/>
          <polygon fill="url(#gGreen)" points="2369.500,1223 2425,1280.300 2369.500,1334 2320,1280.300"/>
          <g class="rp-ax">
            <text x="2370" y="1110">服务态度</text><text x="2370" y="1452">任务效率</text><text x="2173" y="1280">产品质量</text><text x="2567" y="1280">售后保障</text>
          </g>
          <text class="rp-unit" x="1595" y="1467">工单</text>
          <path class="rp-gl" d="M1595 1512.500H2680M1595 1568H2680M1595 1623.500H2680M1595 1679H2680M1595 1735H2680"/>
          <g class="rp-y"><text x="1583" y="1512.500">12,000</text><text x="1583" y="1568">9,000</text><text x="1583" y="1623.500">6,000</text><text x="1583" y="1679">3,000</text><text x="1583" y="1735">0</text></g>
          <g class="rp-x"><text x="1672" y="1754">7/-1</text><text x="1827" y="1754">7/0</text><text x="1982" y="1754">7/1</text><text x="2137" y="1754">7/2</text><text x="2292" y="1754">7/3</text><text x="2447" y="1754">7/4</text><text x="2602" y="1754">7/5</text></g>
          <path class="rp-area" d="M1672 1642C1720 1675 1770 1691 1827 1691C1870 1691 1930 1665 1982 1645C2040 1610 2075 1573 2137 1573C2195 1573 2215 1719 2292 1719C2350 1719 2400 1715 2447 1697C2500 1675 2555 1640 2602 1621V1735H1672Z"/>
          <path class="rp-line" stroke="url(#gLine)" d="M1672 1642C1720 1675 1770 1691 1827 1691C1870 1691 1930 1665 1982 1645C2040 1610 2075 1573 2137 1573C2195 1573 2215 1719 2292 1719C2350 1719 2400 1715 2447 1697C2500 1675 2555 1640 2602 1621"/>
          <path class="rp-mean" d="M1600 1656H2660"/>
          <ellipse class="rp-mean-d" cx="1595" cy="1656" rx="6" ry="6"/>
          <path class="rp-mean-d" d="M2656 1648L2680 1656L2656 1664L2661 1656Z"/>
          <text class="rp-mean-t" x="2716" y="1648">平均值:</text><text class="rp-mean-t" x="2716" y="1666">4239</text>
          <g class="rp-dots">
            <ellipse cx="1672" cy="1642" rx="6.500" ry="6.500"/><ellipse cx="1827" cy="1691" rx="6.500" ry="6.500"/><ellipse cx="1982" cy="1645" rx="6.500" ry="6.500"/><ellipse cx="2137" cy="1573" rx="6.500" ry="6.500"/><ellipse cx="2292" cy="1719" rx="6.500" ry="6.500"/><ellipse cx="2447" cy="1697" rx="6.500" ry="6.500"/><ellipse cx="2602" cy="1621" rx="6.500" ry="6.500"/>
          </g>
        </svg>
      </div>
    </article>
  </section>
  <div class="watermark">CSDN @勇敢*牛牛</div>
</main>
</body>
</html>
```

FILE: styles.css
```css
* { box-sizing: border-box; }
html, body { margin: 0; padding: 0; }
body {
  width: 2880px;
  height: 1800px;
  overflow: hidden;
  font-family: "Liberation Sans", "Noto Sans CJK SC", sans-serif;
  background: #03050f;
  color: #fff;
}
.sprite { display: block; width: 0; height: 0; overflow: hidden; }
h1 { margin: 0; font-weight: 400; }
em { font-style: normal; }

/* ---------- browser chrome ---------- */
.browser { height: 222px; background: #fff; color: #202124; }
.tabs {
  height: 84px;
  padding-left: 16px;
  background: #dfe1e6;
  display: flex;
  align-items: flex-end;
}
.tab {
  position: relative;
  width: 374px;
  height: 68px;
  padding: 0 16px 0 25px;
  display: flex;
  align-items: center;
  font-size: 25.400px;
  color: #3c4043;
}
.tab.active { background: #fff; border-radius: 20px 20px 0 0; color: #202124; width: 376px; margin-right: -2px; }
.tab.sep + .tab.sep::before {
  content: "";
  position: absolute;
  left: -1px;
  top: 15px;
  width: 2px;
  height: 40px;
  background: #a6a9ae;
}
.fav { width: 32px; height: 32px; flex: none; }
.tab-title {
  flex: 1;
  margin-left: 15px;
  white-space: nowrap;
  overflow: hidden;
  -webkit-mask-image: linear-gradient(90deg, #000 86%, transparent 100%);
  mask-image: linear-gradient(90deg, #000 86%, transparent 100%);
}
.tab-title.wide { letter-spacing: .55px; }
.tab-title.narrow { font-size: 23.400px; }
.tab-x { width: 24px; margin-left: 8px; font-size: 38px; line-height: 38px; text-align: center; color: #3c4043; font-weight: 300; }
.tab-new { width: 60px; margin: 0 0 0 15px; height: 68px; font-size: 48px; line-height: 62px; text-align: center; color: #3c4043; }
.tab-chev { width: 20px; height: 12px; margin: 0 0 28px 118px; }
.toolbar {
  height: 72px;
  padding: 0 17px 0 24px;
  display: flex;
  align-items: center;
}
.tool { width: 40px; height: 40px; fill: #5f6368; margin-right: 24px; flex: none; }
.tool:nth-child(3) { margin-right: 0; }
.omnibox {
  margin-left: 24px;
  width: 2110px;
  height: 56px;
  border-radius: 28px;
  background: #f1f3f4;
  display: flex;
  align-items: center;
  padding: 0 19px 0 21px;
  flex: none;
}
.omni-info { width: 32px; height: 34px; fill: #5f6368; flex: none; }
.url { margin-left: 16px; font-size: 28px; letter-spacing: .7px; color: #202124; flex: 1; }
.url-port { color: #5f6368; }
.omni-ic { width: 34px; height: 34px; fill: #5f6368; margin-left: 30px; flex: none; }
.gt { font-size: 10px; fill: #fff; text-anchor: middle; font-weight: 700; }
.gt2 { font-size: 8px; fill: #5f6368; text-anchor: middle; }
.ext-row { margin-left: 28px; display: flex; align-items: center; }
.ext { width: 32px; height: 32px; flex: none; display: block; }
.dk { fill: #5f6368; }
.ext-badged { position: relative; margin-left: 31px; display: block; }
.ext-row > .ext:first-child { margin-left: 0; }
.badge {
  position: absolute;
  right: -13px;
  bottom: -14px;
  width: 24px;
  height: 24px;
  background: #f0ab4a;
  border-radius: 4px;
  font-size: 18px;
  line-height: 24px;
  text-align: center;
  color: #202124;
}
.ext-pink {
  margin-left: 32px;
  width: 32px;
  height: 36px;
  background: #ee4d8d;
  border-radius: 5px;
  color: #fff;
  font-size: 15px;
  line-height: 36px;
  text-align: center;
  letter-spacing: -1px;
  flex: none;
}
.ext-row .ext:nth-child(4), .ext-row .ext:nth-child(5) { margin-left: 32px; }
.avatar {
  margin-left: 27px;
  width: 44px;
  height: 44px;
  border-radius: 50%;
  background: #0a84d0;
  color: #fff;
  font-size: 24px;
  line-height: 42px;
  text-align: center;
  flex: none;
}
.update {
  margin-left: 14px;
  width: 136px;
  height: 56px;
  border: 2px solid #202124;
  border-radius: 28px;
  background: #f1f3f4;
  font-size: 27px;
  display: flex;
  align-items: center;
  justify-content: space-between;
  padding: 0 20px 0 25px;
  color: #202124;
  flex: none;
}
.dots { width: 6px; height: 26px; fill: #202124; }
.bookmarks {
  height: 66px;
  padding: 0 0 2px 28px;
  border-bottom: 2px solid #dadce0;
  display: flex;
  align-items: center;
  gap: 29px;
  font-size: 25.400px;
  color: #3c4043;
  white-space: nowrap;
}
.bm { display: flex; align-items: center; gap: 16px; }
.bm-ic { width: 32px; height: 32px; flex: none; }
.csdn {
  width: 32px;
  height: 34px;
  background: #fc5531;
  color: #fff;
  font-size: 30px;
  line-height: 34px;
  text-align: center;
  flex: none;
  display: block;
}

/* ---------- dashboard ---------- */
.dash {
  position: relative;
  height: 1578px;
  overflow: hidden;
  background-color: #03050f;
  background-image:
    radial-gradient(circle at 31px 47px, rgba(160,190,230,.3) 1px, transparent 1.6px),
    radial-gradient(circle at 120px 15px, rgba(120,170,230,.28) 1px, transparent 1.5px),
    radial-gradient(circle at 75px 130px, rgba(200,210,230,.2) 1px, transparent 1.5px),
    radial-gradient(circle at 12px 88px, rgba(130,200,210,.2) 1.2px, transparent 1.8px),
    linear-gradient(90deg, #000 0, transparent 40px, transparent 2840px, #000 2880px);
  background-size: 173px 151px, 229px 197px, 131px 167px, 307px 263px, 100% 100%;
}
.nebula { position: absolute; border-radius: 50%; pointer-events: none; }
.neb-a {
  left: 1050px; top: 760px; width: 860px; height: 230px;
  transform: rotate(-38deg);
  background: radial-gradient(ellipse at center, rgba(26,74,160,.42), rgba(20,50,120,.18) 55%, transparent 72%);
  filter: blur(18px);
}
.neb-b {
  left: 1130px; top: 985px; width: 170px; height: 40px;
  transform: rotate(-12deg);
  background: radial-gradient(ellipse at center, rgba(30,120,130,.6), transparent 72%);
  filter: blur(4px);
}
.hd-deco { position: absolute; left: 0; top: 0; pointer-events: none; }
.hd-lines path { fill: none; }
.l-dim { stroke: #0d4a62; stroke-width: 4; }
.l-bright { stroke: #01b4f0; stroke-width: 4; }
.l-blue { stroke: #4a80dc; stroke-width: 2.500; }
.l-black { stroke: #000; stroke-width: 5; }
.l-node rect { fill: #04c4f4; }

.hd-row {
  position: relative;
  margin: 96px 59px 0;
  height: 73px;
  display: flex;
  align-items: flex-start;
  font-size: 26px;
}
.hd-bar {
  width: 731px;
  height: 73px;
  background: #0f1327;
  color: #d5d9e2;
  line-height: 75px;
}
.hd-left { padding-left: 37px; clip-path: polygon(0 0, 660px 0, 731px 100%, 0 100%); }
.hd-right { margin-left: -54px; padding-right: 36px; text-align: right; clip-path: polygon(71px 0, 100% 0, 100% 100%, 0 100%); font-size: 26.300px; }
.hd-tab {
  width: 468px;
  height: 73px;
  background: #1a5cd8;
  color: #c9d8f5;
  text-align: center;
  line-height: 75px;
}
.hd-tab-l { margin-left: -55px; clip-path: polygon(0 0, 396px 0, 468px 100%, 72px 100%); }
.hd-tab-r { width: 467px; font-weight: 700; clip-path: polygon(73px 0, 467px 0, 397px 100%, 0 100%); }
.hd-center {
  width: 474px;
  margin-top: -39px;
  display: flex;
  flex-direction: column;
  align-items: center;
}
.hd-title { font-size: 35px; line-height: 48px; color: #dfe3ea; white-space: nowrap; }
.hd-wave { margin-top: 19px; display: block; }
.w-line { fill: #2a7fa0; }
.w-blue { fill: #5b93e2; }
.w-green { fill: #3fd8b4; }

.row-top {
  position: relative;
  margin: 28px 0 0 67px;
  height: 602px;
  display: grid;
  grid-template-columns: 426px 515px 834px 497px 425px;
  column-gap: 13px;
  align-items: start;
}
.row-bottom {
  position: relative;
  margin: 13px 0 0 67px;
  height: 749px;
  display: grid;
  grid-template-columns: 1366px 1366px;
  column-gap: 14px;
  align-items: start;
}

.frame {
  position: relative;
  border: 3px solid #1f528f;
  border-radius: 14px;
  padding: 13px 14px 13px 15px;
}
.frame-a { margin-top: 3px; height: 587px; }
.frame-b { margin-top: 3px; height: 587px; }
.frame-c { margin-top: 2px; height: 747px; padding: 11px 14px 14px 14px; }
.frame-c .inner { height: 716px; }
.frame-a .inner, .frame-b .inner { height: 555px; }
.cn {
  position: absolute;
  width: 24px;
  height: 24px;
  border: 0 solid #5ccbef;
  filter: drop-shadow(0 0 3px rgba(90,210,245,.7));
}
.tl { left: -3px; top: -3px; border-width: 3px 0 0 3px; border-top-left-radius: 14px; }
.tr { right: -3px; top: -3px; border-width: 3px 3px 0 0; border-top-right-radius: 14px; }
.bl { left: -3px; bottom: -3px; border-width: 0 0 3px 3px; border-bottom-left-radius: 14px; }
.br { right: -3px; bottom: -3px; border-width: 0 3px 3px 0; border-bottom-right-radius: 14px; }

.inner, .card {
  border-radius: 14px;
  background: rgba(12,17,34,.9);
}
.card { background: rgba(15,20,42,.84); }
.title {
  display: flex;
  align-items: center;
  font-size: 17.500px;
  color: #c9cdd6;
  white-space: nowrap;
}
.t-ic { width: 23px; height: 23px; fill: #000; margin-right: 12px; flex: none; }
.t-a { height: 45px; padding: 3px 0 0 11px; }
.t-pie { margin-right: 11px; }
.bars-deco {
  margin-left: 15px;
  width: 139px;
  height: 16px;
  background:
    repeating-linear-gradient(90deg, #58a9e6 0 3px, transparent 3px 5px) top / 100% 6px no-repeat,
    repeating-linear-gradient(90deg, #2a86c8 0 4px, transparent 4px 7px) bottom / 100% 6px no-repeat;
}
.dots-deco { margin-left: 18px; fill: #dfe3ea; }
.dd-g { fill: #1fd4a8; }

/* pie */
.pie { display: block; }
.pie-lines path { fill: none; stroke-width: 2; opacity: .55; }
.pie-labels text { font-size: 17px; text-anchor: middle; dominant-baseline: central; }
.stats { display: grid; grid-template-columns: 196px 195px; row-gap: 10px; }
.stat { height: 74px; text-align: center; }
.stat-v { height: 44px; padding-left: 6px; font-size: 35.500px; line-height: 44px; color: #30d5ae; text-align: left; }
.yen { margin-right: 3px; font-size: 26px; color: #f5b50a; font-weight: 700; }
.stat-l { margin-top: 2px; font-size: 20px; line-height: 28px; color: #c4c9d2; white-space: nowrap; }
.stat-l em { color: #a3d21c; }

/* map */
.map { display: block; }
.regions path { stroke: #17bfe0; stroke-width: 1.500; vector-effect: non-scaling-stroke; stroke-linejoin: round; }
.regions .bright { stroke: #12d4ee; stroke-width: 2.500; }
.glow { filter: drop-shadow(0 0 2.500px rgba(40,215,250,.9)) drop-shadow(0 0 6px rgba(40,190,245,.55)); }
.coast { fill: #0a2038; stroke: #17609e; stroke-width: 1.500; vector-effect: non-scaling-stroke; }
.coast-line { fill: none; stroke: #154f86; stroke-width: 1.500; vector-effect: non-scaling-stroke; }
.isles ellipse { fill: #1c86bd; }
.city text { font-size: 20px; fill: #e8eef6; text-anchor: middle; dominant-baseline: central; letter-spacing: .3px; }
.tip {
  position: absolute;
  left: 457px;
  top: 178px;
  width: 107px;
  height: 79px;
  padding: 9px 0 0 8px;
  z-index: 5;
  border-radius: 6px;
  background: rgba(50,50,50,.88);
  font-size: 20px;
  line-height: 32px;
  color: #fff;
  white-space: nowrap;
}

/* KPI */
.mid { margin-top: 8px; }
.kpis { display: grid; grid-template-columns: repeat(3, 1fr); gap: 12px; }
.kpi {
  height: 102px;
  padding: 12px 0 0 17px;
  border-radius: 10px;
  background: rgba(15,20,42,.84);
}
.kpi-l { font-size: 17.500px; line-height: 24px; color: #1f7ae6; }
.kpi-v { margin: 11px 0 0 7px; font-size: 37px; line-height: 44px; color: #30d5ae; }
.mid-low { margin-top: 8px; display: flex; gap: 10px; align-items: flex-start; }
.rank { width: 491px; height: 365px; padding: 15px 14px 0 15px; }
.rank-title { padding-left: 52px; font-size: 17.500px; line-height: 30px; color: #c9cdd6; margin-bottom: 13px; }
.rank-item { height: 66px; }
.ri-top { height: 30px; display: flex; align-items: center; font-size: 19px; line-height: 30px; color: #e8ebf0; }
.ri-top span { height: 30px; }
.ri-no { width: 58px; color: #1f78ea; }
.ri-name { flex: 1; }
.ri-bar { height: 9px; margin-top: 6px; background: #1a6df5; border-radius: 1px; }
.ri-track { height: 3px; margin-top: 3px; background: #1c47a0; }
.mid-right { width: 333px; display: flex; flex-direction: column; gap: 7px; }
.rings { height: 175px; }
.rings-titles { height: 50px; padding: 0 12px 0 11px; display: flex; justify-content: space-between; align-items: center; font-size: 20px; color: #d5d9e2; }
.rings-svg { display: block; }
.ring-base { fill: none; stroke-width: 3.500; }
.rb-a { stroke: #164b63; }
.rb-b { stroke: #7b7664; }
.ring-on { fill: none; stroke-width: 4; stroke-linecap: round; }
.ro-a { stroke: #0aa6f5; filter: drop-shadow(0 0 4px rgba(10,166,245,.7)); }
.ro-b { stroke: #ff9a0e; filter: drop-shadow(0 0 4px rgba(255,154,14,.6)); }
.ring-t { font-size: 25px; font-weight: 700; text-anchor: middle; dominant-baseline: central; }
.rt-a { fill: #3fb6e6; }
.rt-b { fill: #5cc3cc; }
.wave {
  width: 331px;
  height: 173px;
  border: 4px solid transparent;
  border-radius: 18px;
  background: linear-gradient(#0b0f25, #0b0f25) padding-box, linear-gradient(#30d8b0, #0db0f5) border-box;
}
.wave-svg { display: block; }
.wave-back { fill: #2f8288; opacity: .72; }
.wave-t { font-size: 36px; font-weight: 700; fill: #2ad5e2; text-anchor: middle; dominant-baseline: central; }

/* product */
.product { margin-top: 3px; height: 599px; }
.t-p { height: 50px; padding: 16px 0 0 19px; }
.t-list { width: 21px; margin-right: 11px; }
.hbars { margin-top: 14px; padding: 0 22px; display: flex; flex-direction: column; gap: 11.200px; }
.hbar { height: 24px; display: flex; align-items: center; font-size: 17.500px; color: #e4e7ec; }
.hb-l { width: 50px; flex: none; }
.hb-track {
  flex: 1;
  height: 16px;
  padding: 0;
  border: 2px solid #3c4254;
  border-radius: 8px;
  background: #0a0e20;
  overflow: hidden;
}
.hb-fill { height: 12px; border-radius: 6px; }
.hf1 { background: #37a2da; }
.hf2 { background: #32c5e9; }
.hf3 { background: #67e0e3; }
.hf4 { background: #9fe6b8; }
.hf5 { background: #ffdb5c; }
.haxis { margin: 12px 22px 0 72px; height: 24px; display: flex; justify-content: space-between; font-size: 16px; line-height: 24px; color: #e4e7ec; }
.radar { display: block; }
.rd-grid circle { fill: none; stroke: #3e3a34; stroke-width: 1.500; }
.rd-axis { fill: none; stroke: #8a7638; stroke-width: 1.500; }
.rs { stroke-width: 2; }
.rs-a { fill: rgba(220,95,50,.16); stroke: #b8623a; }
.rs-b { fill: rgba(225,120,50,.2); stroke: #c8703a; }
.rs-c { fill: rgba(240,150,70,.24); stroke: #dc8c44; }
.rs-d { fill: rgba(230,190,90,.3); stroke: #b6dca0; }
.rs-e { fill: rgba(240,205,100,.45); stroke: #e6c664; }
.rs-f { fill: rgba(235,170,80,.2); stroke: #d09a50; stroke-width: 1; }
.rd-labels text { font-size: 17.500px; fill: #c8a24a; text-anchor: middle; dominant-baseline: central; }

/* cut-corner frames */
.cutframe { position: relative; }
.cut-svg { position: absolute; left: 0; top: 0; pointer-events: none; }
.cut-l { fill: none; stroke: #4a6ac9; stroke-width: 2; }
.cut-c { fill: none; stroke: #2fd4e6; stroke-width: 2; }
.cut-dash rect { fill: #5f86ea; }
.cut-rank { height: 589px; margin-left: -3px; padding: 26px 17px 0 16px; }
.rank-inner { height: 555px; background: rgba(15,20,42,.9); overflow: hidden; }
.t-r { height: 41px; padding: 8px 0 0 12px; }
.t-trend { margin-right: 13px; }
.tbl { font-size: 20px; color: #e4e7ec; }
.trow {
  height: 63.600px;
  display: grid;
  grid-template-columns: 74px 106px 106px 106px;
  align-items: center;
  background: #0f1429;
}
.trow.alt { background: #171c36; }
.trow.th { height: 51px; padding-bottom: 4px; font-size: 21px; color: #fff; font-weight: 500; }
.trow span { padding-left: 15px; line-height: 34px; white-space: nowrap; }
.trow .c0 { padding-left: 0; text-align: center; }
.c0 u { display: inline-block; min-width: 20px; text-decoration: none; background: #0b0f20; border-radius: 4px; line-height: 34px; }
.up { color: #1fbf90; }
.down { color: #ff4d1e; }
.trow b { font-weight: 400; letter-spacing: -6px; margin-right: 6px; }

.cut-chart { height: 749px; padding: 25px 16px 0 17px; }
.chart-inner { height: 709px; background: linear-gradient(90deg, rgba(10,15,30,.95), rgba(16,21,44,.8)); }
.t-c { height: 46px; padding: 3px 0 0 12px; }
.combo { display: block; }
.axis { fill: none; stroke: #b4b7bd; stroke-width: 1.500; }
.ylab text { font-size: 18px; fill: #c9ccd2; text-anchor: end; dominant-baseline: central; }
.rlab text { font-size: 18px; fill: #c9ccd2; dominant-baseline: central; }
.bars rect { width: 32px; rx: 15px; ry: 14px; }
.rate { fill: none; stroke: #e321a8; stroke-width: 3; vector-effect: non-scaling-stroke; }
.marks circle { r: 11px; fill: #fff; stroke: #e321a8; stroke-width: 3; vector-effect: non-scaling-stroke; }
.xlab text { font-size: 17.500px; fill: #d5d8de; text-anchor: middle; dominant-baseline: central; }
.legend text { font-size: 17px; fill: #a4a8b0; dominant-baseline: central; }
.lg-line { stroke: #8c1e78; stroke-width: 2.500; fill: none; }
.lg-dot { fill: #fff; stroke: #e321a8; stroke-width: 2; }

/* repair */
.frame-c .inner { background: rgba(12,17,34,.92); }
.t-d { height: 42px; padding: 7px 0 0 12px; }
.repair { display: block; }
.rp-date { font-size: 26px; fill: #e4e7ec; dominant-baseline: central; }
.rp-lg { font-size: 20px; fill: #e4e7ec; dominant-baseline: central; }
.rp-grid polygon { fill: rgba(140,150,170,.085); stroke-width: 1.500; }
.rp-grid path { fill: none; stroke-width: 1.500; }
.rp-yellow { filter: drop-shadow(0 0 7px rgba(250,208,79,.35)); }
.rp-ax text { font-size: 17.500px; font-weight: 700; fill: #d8dbe0; text-anchor: middle; dominant-baseline: central; }
.rp-unit { font-size: 20px; fill: #5c6068; text-anchor: middle; dominant-baseline: central; }
.rp-gl { fill: none; stroke: #242a3e; stroke-width: 2; }
.rp-y text { font-size: 18px; fill: #8a8e97; text-anchor: end; dominant-baseline: central; }
.rp-x text { font-size: 18px; fill: #8a8e97; text-anchor: middle; dominant-baseline: central; }
.rp-area { fill: rgba(30,150,200,.08); }
.rp-line { fill: none; stroke-width: 4; }
.rp-mean { fill: none; stroke: #b59a3a; stroke-width: 2; stroke-dasharray: 6 5; }
.rp-mean-d { fill: #b59a3a; }
.rp-mean-t { font-size: 17px; fill: #b59a3a; text-anchor: middle; dominant-baseline: central; }
.rp-dots ellipse { fill: #fff; }
.watermark {
  position: absolute;
  right: 16px;
  bottom: 6px;
  font-size: 19px;
  line-height: 26px;
  color: rgba(255,255,255,.55);
  white-space: nowrap;
}
```
